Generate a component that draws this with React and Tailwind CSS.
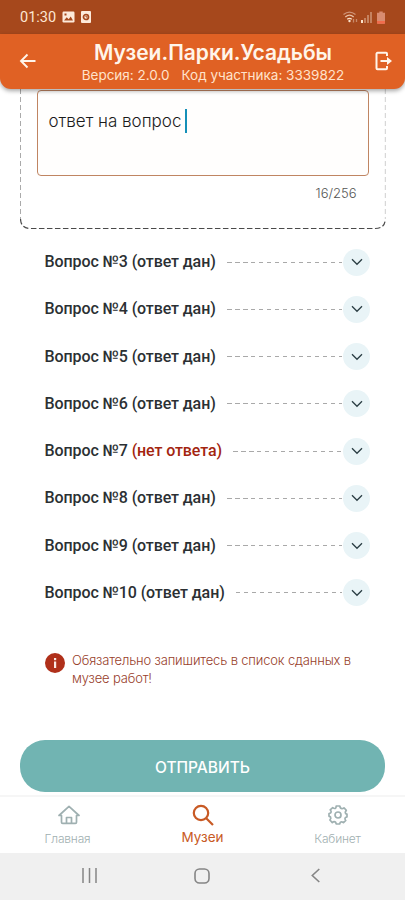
import clsx from 'clsx';

const questions = [
  { id: 3, answered: true },
  { id: 4, answered: true },
  { id: 5, answered: true },
  { id: 6, answered: true },
  { id: 7, answered: false },
  { id: 8, answered: true },
  { id: 9, answered: true },
  { id: 10, answered: true },
];

function StatusBar() {
  return (
    <div className="flex h-[34px] shrink-0 items-center bg-[#a6481c] pr-[20px] pl-[20px] text-[#fde6d2]">
      <span className="w-[37px] pt-[2px] font-['Roboto'] text-[14.5px] leading-none whitespace-nowrap">01:30</span>
      <svg className="ml-[5px]" width="13" height="12" viewBox="0 0 13 12">
        <rect x="0.5" y="0.5" width="12" height="11" rx="1.2" fill="#fdeada" />
        <path d="M2 9.5l2.7-3.3 2 2 2-2.7L11 9.5z" fill="#a6481c" />
        <rect x="2.5" y="2.5" width="2" height="2" fill="#a6481c" />
      </svg>
      <svg className="ml-[6px]" width="10" height="12" viewBox="0 0 10 12">
        <rect x="0" y="0" width="10" height="12" rx="1" fill="#fdeada" />
        <circle cx="5" cy="6" r="2.5" fill="none" stroke="#a6481c" strokeWidth="1.7" />
        <path d="M5 4.5V6h1.5" fill="none" stroke="#a6481c" />
      </svg>
      <svg className="ml-auto" width="15" height="13" viewBox="0 0 15 13" fill="none" strokeWidth="1.3">
        <path d="M0.5 3.6q6-5 12 0" stroke="#cf9478" />
        <path d="M2.3 6q4.2-3.6 8.4 0" stroke="#e9bfa4" />
        <path d="M4.2 8.2q2.3-1.8 4.6 0" stroke="#fbe2cb" />
        <circle cx="6.5" cy="10" r="1.2" fill="#fbe2cb" />
        <path d="M10.5 8v3.5M13.5 8v3" stroke="#c98a6c" />
      </svg>
      <svg className="ml-[3px]" width="12" height="12" viewBox="0 0 12 12">
        <rect x="0" y="9" width="2" height="3" fill="#fbe2cb" />
        <rect x="3" y="7" width="2" height="5" fill="#c5825f" />
        <rect x="6" y="4" width="2" height="8" fill="#c5825f" />
        <rect x="9" y="1" width="2" height="11" fill="#c5825f" />
      </svg>
      <svg className="ml-[4px]" width="8" height="13" viewBox="0 0 8 13">
        <path d="M2.3 0.5h3.4v1.3H8V12a.8.8 0 01-.8.8H.8A.8.8 0 010 12V1.8h2.3z" fill="#d98c70" />
        <path d="M0 10h8v2a.8.8 0 01-.8.8H.8A.8.8 0 010 12z" fill="#f06c4c" />
      </svg>
    </div>
  );
}

function Header() {
  return (
    <header className="relative z-10 flex h-[54.5px] shrink-0 items-center rounded-b-[11px] bg-[#e06124] pr-[12px] pl-[19px] text-[#fff5ea] shadow-[0_2px_4px_rgba(0,0,0,0.35)]">
      <svg width="18" height="18" viewBox="0 0 18 18" fill="none" stroke="currentColor" strokeWidth="1.9">
        <path d="M16.5 9H2.5M8.5 2.5L2 9l6.5 6.5" />
      </svg>
      <div className="ml-[26px] flex w-[300px] flex-col items-center pt-[3px] font-['Inter'] whitespace-nowrap">
        <h1 className="text-[21px] leading-[24px] font-semibold">Музеи.Парки.Усадьбы</h1>
        <p className="text-[13.5px] leading-[20px] text-[#ffe3cc]">
          Версия: 2.0.0<span className="ml-[12px]">Код участника: 3339822</span>
        </p>
      </div>
      <svg className="ml-auto" width="18" height="20" viewBox="0 0 18 20" fill="none" stroke="currentColor" strokeWidth="2">
        <path d="M12 5V2.7a.9.9 0 00-.9-.9H2.5a1 1 0 00-1 1v14.4a1 1 0 001 1h8.6a.9.9 0 00.9-.9V15" />
        <path d="M5.5 10h8" />
        <path d="M12 6l5 4-5 4z" fill="currentColor" stroke="none" />
      </svg>
    </header>
  );
}

function AnswerBox() {
  return (
    <section className="relative mx-[20px] h-[140.5px] shrink-0 px-[16.5px] pt-[1px]">
      {/* Dashed card outline */}
      <svg className="absolute inset-0" width="366" height="141" viewBox="0 0 366 141" fill="none">
        <path d="M0.5 0V130" stroke="#aaaaaa" strokeDasharray="5 3" />
        <path d="M365.3 0V130" stroke="#cfcfcf" strokeDasharray="5 3" />
        <path d="M0.5 130q0.5 9.5 10 9.5H355q10 0 10.3-9.5" stroke="#4a4a4a" strokeWidth="1.2" strokeDasharray="5.5 2.5" />
      </svg>
      <div className="h-[86px] w-[332px] rounded-[4px] border border-[#c08562] bg-[#fffefd] pt-[18px] pl-[11px]">
        <div className="flex items-center font-['Inter'] text-[17px] leading-[25px] font-light text-[#1b1b1b]">
          <span className="w-[136px] whitespace-nowrap">ответ на вопрос</span>
          <span className="h-[24px] w-[2px] bg-[#1590b8]" />
        </div>
      </div>
      <p className="mt-[7px] pr-[12px] text-right font-['Inter'] text-[13px] leading-[20px] font-light text-[#555]">16/256</p>
    </section>
  );
}

function QuestionRow({ id, answered }) {
  return (
    <li className="flex h-[47.25px] items-center">
      <span className="font-['Roboto'] text-[16px] font-medium tracking-[-0.1px] whitespace-nowrap text-[#2b3033]">
        Вопрос №{id} <span className={clsx(!answered && 'text-[#a3250f]')}>{answered ? '(ответ дан)' : '(нет ответа)'}</span>
      </span>
      <span className="ml-[11px] h-px flex-1 bg-[repeating-linear-gradient(90deg,#a9a9a9_0_4.5px,transparent_4.5px_8px)]" />
      <span className="ml-[1px] flex size-[27px] items-center justify-center rounded-full bg-[#e9f4f7]">
        <svg width="12" height="8" viewBox="0 0 12 8" fill="none" stroke="#2b3e44" strokeWidth="1.3">
          <path d="M1 1.3l5 5 5-5" />
        </svg>
      </span>
    </li>
  );
}

function Notice() {
  return (
    <div className="mt-[34px] flex gap-[7px] pl-[45px] text-[#98402b]">
      <svg className="mt-[2px] shrink-0" width="20" height="20" viewBox="0 0 20 20">
        <circle cx="10" cy="10" r="10" fill="#b0301a" />
        <rect x="9" y="5" width="2.2" height="2.2" fill="#fbe9e4" />
        <rect x="9" y="8.5" width="2.2" height="6.5" fill="#fbe9e4" />
      </svg>
      <p className="font-['Inter'] text-[13px] leading-[18px] font-light tracking-[-0.16px] whitespace-nowrap">
        Обязательно запишитесь в список сданных в<br />музее работ!
      </p>
    </div>
  );
}

function BottomNav() {
  return (
    <nav className="grid h-[58px] shrink-0 grid-cols-3 border-t-2 border-[#f6f6f6] bg-white font-['Inter'] text-[#9fb0b1]">
      <a className="flex flex-col items-center pt-[8px]">
        <svg className="ml-[2px]" width="22" height="20" viewBox="0 0 22 20" fill="none" stroke="currentColor" strokeWidth="1.7" strokeLinejoin="round">
          <path d="M1 10.5L11 1.3l10 9.200h-2.500v6.700a1.200 1.200 0 01-1.200 1.200H4.700a1.200 1.200 0 01-1.200-1.200v-6.700z" />
          <path d="M8.5 18v-5.500h5V18" />
        </svg>
        <span className="mt-[6px] text-[12px] leading-[16px] font-light tracking-[-0.2px]">Главная</span>
      </a>
      <a className="flex flex-col items-center pt-[7px] text-[#c85a25]">
        <svg className="ml-[1px]" width="22" height="22" viewBox="0 0 22 22" fill="none" stroke="currentColor" strokeWidth="2.2">
          <circle cx="9" cy="9" r="7.2" />
          <path d="M14 14l7 7" />
        </svg>
        <span className="mt-[2px] text-[13.5px] leading-[18px]">Музеи</span>
      </a>
      <a className="flex flex-col items-center pt-[8px]">
        <svg className="ml-[1px]" width="20" height="20" viewBox="0 0 20 20" fill="none" stroke="currentColor" strokeWidth="1.7" strokeLinejoin="round">
          <path d="M8.2 1h3.6q.4 2.6 2.2 2.6 1.2 0 2-.8l2.3 2.6q-1.6 1.8-.8 3 .5.6 1.500.6v3q-2.200.2-2 2 .1.8.8 1.500L15.500 17.700q-1.800-1.400-3-.6-.6.5-.7 1.900H8.200q-.3-2.300-2-2.300-1 0-1.900.9L1.900 15q1.500-1.700.7-2.900-.5-.7-1.600-.8V8.500q2.200-.1 2.100-2 0-.8-.9-1.700L4.700 2.600q1.700 1.400 2.900.6.5-.5.600-2.200z" />
          <circle cx="10" cy="10" r="3" />
        </svg>
        <span className="mt-[6px] text-[12px] leading-[16px] font-light tracking-[-0.2px]">Кабинет</span>
      </a>
    </nav>
  );
}

function SystemNav() {
  return (
    <div className="grid h-[47px] shrink-0 grid-cols-[113px_113px_113px] place-content-center items-center justify-items-center bg-[#f0f0f0] pr-[1px] pb-[2px] text-[#858585]">
      <svg width="15" height="15" viewBox="0 0 15 15" stroke="currentColor" strokeWidth="1.5">
        <path d="M1 0v15M7.5 0v15M14 0v15" />
      </svg>
      <svg width="16" height="16" viewBox="0 0 16 16" fill="none" stroke="currentColor" strokeWidth="1.6">
        <rect x="1" y="1" width="14" height="14" rx="4.5" />
      </svg>
      <svg width="9" height="15" viewBox="0 0 9 15" fill="none" stroke="currentColor" strokeWidth="1.6">
        <path d="M8.3 1L1.3 7.5l7 6.5" />
      </svg>
    </div>
  );
}

export default function App() {
  return (
    <div className="flex h-[900px] w-[405px] flex-col overflow-hidden bg-white">
      <StatusBar />
      <Header />
      <main className="flex flex-1 flex-col">
        <AnswerBox />
        <ul className="mt-[9.5px] pr-[35px] pl-[44.5px]">
          {questions.map((q) => (
            <QuestionRow key={q.id} {...q} />
          ))}
        </ul>
        <Notice />
        <button className="mx-[20px] mt-auto mb-[3px] h-[52px] rounded-[25px] bg-[#71b4b2] pt-[3px] font-['Inter'] text-[15.5px] font-medium text-white">
          ОТПРАВИТЬ
        </button>
      </main>
      <BottomNav />
      <SystemNav />
    </div>
  );
}
